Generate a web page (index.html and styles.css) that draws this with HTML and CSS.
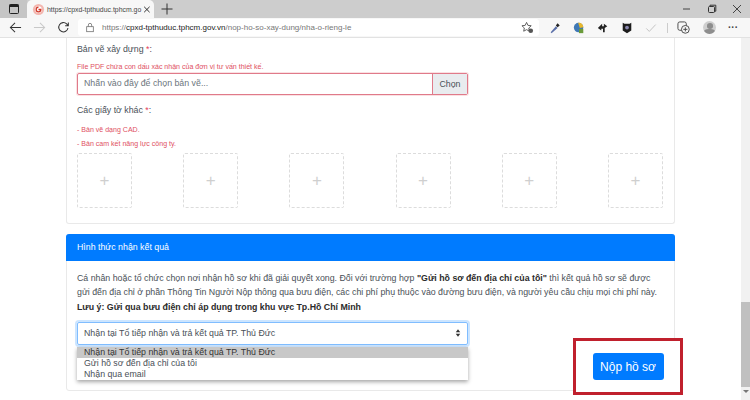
FILE: index.html
```html
<!DOCTYPE html>
<html lang="vi">
<head>
  <meta charset="UTF-8">
  <meta name="viewport" content="width=device-width, initial-scale=1.0">
  <title>Nộp hồ sơ</title>
  <link rel="stylesheet" href="styles.css">
</head>
<body>
  <div class="tabstrip">
    <span class="tab-actions"><svg viewBox="0 0 12 12" width="12" height="12"><rect x="1.500" y="1.500" width="9" height="9" rx="1" fill="none" stroke="#222" stroke-width="1"/><rect x="1.500" y="1.500" width="9" height="2.500" fill="#222"/></svg></span>
    <div class="tab">
      <svg class="favicon" viewBox="0 0 14 14" width="13" height="13"><circle cx="7" cy="7" r="6" fill="#f3b7b0"/><circle cx="7" cy="7" r="3.600" fill="#fff"/><path d="M7 4.500a2.500 2.500 0 1 0 2.500 2.500H7" fill="none" stroke="#d0392b" stroke-width="1.400"/></svg>
      <span class="tab-title">https://cpxd-tpthuduc.tphcm.go</span>
      <svg viewBox="0 0 10 10" width="9" height="9"><path d="M1.500 1.500l7 7M8.500 1.500l-7 7" stroke="#222" stroke-width="1.200"/></svg>
    </div>
    <svg class="new-tab" viewBox="0 0 12 12" width="12" height="12"><path d="M6 .5v11M.5 6h11" stroke="#333" stroke-width="1"/></svg>
    <div class="win-controls">
      <svg viewBox="0 0 10 10" width="10" height="10"><path d="M1 5h7" stroke="#444" stroke-width="1"/></svg>
      <svg viewBox="0 0 10 10" width="10" height="10"><rect x="1.500" y="2.500" width="6" height="6" rx="1" fill="none" stroke="#333"/><path d="M3 2.500V1.200h5.800v6H7" fill="none" stroke="#333"/></svg>
      <svg viewBox="0 0 10 10" width="10" height="10"><path d="M1 1l8 8M9 1l-8 8" stroke="#444" stroke-width="1"/></svg>
    </div>
  </div>

  <div class="toolbar">
    <svg class="nav-icon" viewBox="0 0 14 14" width="13" height="13"><path d="M13 7H1.500M6.500 2l-5 5 5 5" fill="none" stroke="#333" stroke-width="1.100"/></svg>
    <svg class="nav-icon" viewBox="0 0 14 14" width="13" height="13"><path d="M1 7h11.500M7.500 2l5 5-5 5" fill="none" stroke="#c8c8c8" stroke-width="1.100"/></svg>
    <svg class="nav-icon" viewBox="0 0 14 14" width="13" height="13"><path d="M11.800 7.500A5 5 0 1 1 10.400 3.200L12 5M12.200 1.500V5H8.800" fill="none" stroke="#333" stroke-width="1.100"/></svg>
    <div class="address">
      <svg viewBox="0 0 12 12" width="10" height="11"><rect x="2" y="5" width="8" height="6" fill="none" stroke="#777"/><path d="M4 5V3a2 2 0 0 1 4 0v2" fill="none" stroke="#777"/></svg>
      <span class="url"><span class="url-dim">https://</span>cpxd-tpthuduc.tphcm.gov.vn<span class="url-dim">/nop-ho-so-xay-dung/nha-o-rieng-le</span></span>
      <svg class="fav-star" viewBox="0 0 14 14" width="13" height="13"><path d="M6 1.500l1.500 3.200 3.500.4-2.600 2.400.7 3.500L6 9.300l-3.100 1.700.7-3.500L1 5.100l3.500-.4z" fill="none" stroke="#555"/><circle cx="10.500" cy="10.500" r="2.500" fill="#555"/></svg>
    </div>
    <div class="extensions">
      <svg viewBox="0 0 14 14" width="12" height="12"><path d="M2 12l6-7 2 2-7 6z" fill="#5a6fa8"/><path d="M8 4l2-2.500 2.500 2.500L10 6z" fill="#222"/></svg>
      <svg viewBox="0 0 14 14" width="12" height="12"><circle cx="6.500" cy="6.500" r="5.500" fill="#3f78b5"/><path d="M6 1a5 5 0 0 1 6 5l-4 1z" fill="#e8b72c"/><rect x="7" y="8" width="5" height="5" fill="#6a9b3a"/></svg>
      <svg viewBox="0 0 14 14" width="12" height="12"><path d="M1 7l5-5v3h2V2l4 3-3 2v5H7V8H5v2z" fill="#222"/></svg>
      <svg viewBox="0 0 14 14" width="12" height="12"><path d="M2 1l2 1h6l2-1v9l-5 3-5-3z" fill="#1c1c1c"/><circle cx="7" cy="6.500" r="2.200" fill="#8a88b0"/></svg>
      <svg viewBox="0 0 14 14" width="12" height="12"><path d="M1.500 7.500l3.500 3.500 7.500-8" fill="none" stroke="#bbb"/></svg>
      <span class="divider"></span>
      <svg viewBox="0 0 14 14" width="13" height="13"><rect x="1" y="1" width="9" height="9" rx="2" fill="none" stroke="#444"/><circle cx="9" cy="9" r="4.200" fill="#f5f5f5" stroke="#444"/><path d="M9 6.800v4.400M6.800 9h4.400" stroke="#444"/></svg>
      <span class="avatar"><span class="avatar-head"></span><span class="avatar-body"></span></span>
      <span class="more">···</span>
    </div>
  </div>

  <div class="viewport">
    <main class="page">
      <section class="card upload-card">
        <label class="field-label">Bản vẽ xây dựng <span class="req">*</span>:</label>
        <p class="hint hint-first">File PDF chứa con dấu xác nhận của đơn vị tư vấn thiết kế.</p>
        <div class="file-input">
          <span class="file-name">Nhấn vào đây để chọn bản vẽ...</span>
          <span class="file-btn">Chọn</span>
        </div>
        <label class="field-label other-label">Các giấy tờ khác <span class="req">*</span>:</label>
        <p class="hint hint-line">- Bản vẽ dạng CAD.</p>
        <p class="hint hint-line">- Bản cam kết năng lực công ty.</p>
        <div class="upload-row">
          <div class="upload-box">+</div>
          <div class="upload-box">+</div>
          <div class="upload-box">+</div>
          <div class="upload-box">+</div>
          <div class="upload-box">+</div>
          <div class="upload-box">+</div>
        </div>
      </section>

      <section class="card result-card">
        <h2 class="card-header">Hình thức nhận kết quả</h2>
        <div class="card-body">
          <p class="result-text">Cá nhân hoặc tổ chức chọn nơi nhận hồ sơ khi đã giải quyết xong. Đối với trường hợp <strong>"Gửi hồ sơ đến địa chỉ của tôi"</strong> thì kết quả hồ sơ sẽ được gửi đến địa chỉ ở phần Thông Tin Người Nộp thông qua bưu điện, các chi phí phụ thuộc vào đường bưu điện, và người yêu cầu chịu mọi chi phí này.<br><strong>Lưu ý: Gửi qua bưu điện chỉ áp dụng trong khu vực Tp.Hồ Chí Minh</strong></p>
          <div class="select-wrap">
            <div class="select-box">
              <span>Nhận tại Tổ tiếp nhận và trả kết quả TP. Thủ Đức</span>
              <svg viewBox="0 0 8 10" width="6" height="8"><path d="M4 0l3 4H1zM4 10L1 6h6z" fill="#333"/></svg>
            </div>
            <ul class="select-menu">
              <li class="selected">Nhận tại Tổ tiếp nhận và trả kết quả TP. Thủ Đức</li>
              <li>Gửi hồ sơ đến địa chỉ của tôi</li>
              <li>Nhận qua email</li>
            </ul>
          </div>
        </div>
      </section>

      <div class="submit-mark"><button class="submit-btn">Nộp hồ sơ</button></div>
    </main>

    <div class="scrollbar">
      <span class="thumb"></span>
      <span class="arrow-down"></span>
    </div>
  </div>
</body>
</html>
```

FILE: styles.css
```css
* {
  box-sizing: border-box;
}
html, body {
  height: 100%;
}
body {
  margin: 0;
  height: 400px;
  overflow: hidden;
  font-family: 'Liberation Sans', Arial, sans-serif;
  color: #495057;
  background: #fff;
  display: flex;
  flex-direction: column;
}

/* browser chrome */
.tabstrip {
  height: 18px;
  background: #cdcdcd;
  display: flex;
  align-items: center;
  flex-shrink: 0;
}
.tab-actions {
  width: 27px;
  height: 18px;
  background: #c5c5c5;
  display: flex;
  align-items: center;
  justify-content: center;
}
.tab {
  width: 127px;
  height: 18px;
  padding: 0 3px 0 5px;
  background: #f7f7f7;
  border-radius: 5px 5px 0 0;
  display: flex;
  align-items: center;
  gap: 2px;
}
.favicon {
  flex-shrink: 0;
}
.tab-title {
  flex: 1;
  font-size: 6.900px;
  color: #444;
  white-space: nowrap;
}
.new-tab {
  margin-left: 7px;
}
.win-controls {
  margin-left: auto;
  display: flex;
  gap: 15px;
  padding-right: 8px;
}
.toolbar {
  height: 20px;
  background: #f7f7f7;
  border-bottom: 1px solid #e2e2e2;
  display: flex;
  align-items: center;
  padding-left: 9px;
  flex-shrink: 0;
}
.nav-icon {
  margin-right: 11px;
}
.address {
  width: 461px;
  height: 17px;
  margin-left: -3px;
  background: #fff;
  border-radius: 3px;
  display: flex;
  align-items: center;
  padding: 0 5px 0 7px;
  gap: 7px;
}
.url {
  flex: 1;
  font-size: 8px;
  color: #222;
  white-space: nowrap;
}
.url-dim {
  color: #777;
}
.extensions {
  flex: 1;
  display: flex;
  align-items: center;
  gap: 12px;
  padding-left: 10px;
}
.divider {
  width: 1px;
  height: 10px;
  margin: 0 -3px 0 -2px;
  background: #ccc;
}
.avatar {
  width: 13px;
  height: 13px;
  margin-left: 1px;
  border-radius: 50%;
  background: #cfcfcf;
  overflow: hidden;
  display: flex;
  flex-direction: column;
  align-items: center;
}
.avatar-head {
  width: 6px;
  height: 6px;
  margin-top: 2px;
  border-radius: 50%;
  background: #8d8d8d;
}
.avatar-body {
  width: 11px;
  height: 6px;
  border-radius: 50%;
  background: #8d8d8d;
}
.more {
  font-size: 10px;
  font-weight: bold;
  color: #444;
}

/* page */
.viewport {
  flex: 1;
  display: flex;
  min-height: 0;
}
.page {
  flex: 1;
  padding: 0 66px;
  overflow: hidden;
  position: relative;
}
.card {
  border: 1px solid #e9e9e9;
  border-radius: 3px;
  background: #fff;
}
.upload-card {
  height: 187px;
  margin-top: -1px;
  border-top: 0;
  border-radius: 0 0 3px 3px;
  padding: 6px 11px 0 10px;
}
.field-label {
  display: block;
  font-size: 8.800px;
  line-height: 13px;
  color: #495057;
}
.req {
  color: #e4405a;
}
.hint {
  margin: 0;
  font-size: 7.050px;
  color: #e0505f;
}
.hint-first {
  margin-top: 6px;
  line-height: 10px;
}
.file-input {
  height: 22px;
  margin-top: 1px;
  width: 391px;
  display: flex;
  border: 1px solid #e07a8a;
  border-radius: 2px;
  box-shadow: 0 0 0 1px rgba(220, 53, 69, 0.15);
  font-size: 8.800px;
}
.file-name {
  flex: 1;
  padding: 0 6px;
  line-height: 19px;
  color: #6c757d;
}
.file-btn {
  width: 35px;
  text-align: center;
  line-height: 20px;
  background: #e9ecef;
  border-left: 1px solid #e07a8a;
}
.other-label {
  margin-top: 9px;
}
.hint-line {
  line-height: 10px;
  margin-bottom: 4px;
}
.other-label + .hint-line {
  margin-top: 8px;
}
.upload-row {
  margin-top: 2px;
  display: flex;
  justify-content: space-between;
}
.upload-box {
  width: 55px;
  height: 55px;
  border: 1px dashed #dcdcdc;
  border-radius: 2px;
  display: flex;
  align-items: center;
  justify-content: center;
  font-size: 17px;
  color: #cfcfcf;
}
.result-card {
  height: 157px;
  margin-top: 10px;
}
.card-header {
  margin: -1px -1px 0;
  height: 27px;
  padding: 0 11px;
  background: #007bff;
  border-radius: 3px 3px 0 0;
  color: #fff;
  font-size: 8.800px;
  font-weight: normal;
  line-height: 27px;
}
.card-body {
  padding: 10px 10px 0;
}
.result-text {
  margin: 0;
  font-size: 8.800px;
  line-height: 14.300px;
  color: #495057;
}
.result-text strong {
  color: #2b2b2b;
}
.select-wrap {
  position: relative;
  margin-top: 8px;
  width: 391px;
}
.select-box {
  height: 23px;
  padding: 0 6px;
  border: 1px solid #80bdff;
  border-radius: 2px;
  box-shadow: 0 0 0 2px rgba(0, 123, 255, 0.2);
  display: flex;
  align-items: center;
  justify-content: space-between;
  font-size: 8.800px;
}
.select-menu {
  position: absolute;
  top: 25px;
  left: 0;
  right: 0;
  margin: 0;
  padding: 0;
  list-style: none;
  background: #fff;
  box-shadow: 0 2px 4px rgba(0, 0, 0, 0.35);
  font-size: 8.800px;
  line-height: 11px;
}
.select-menu li {
  padding: 0 7px;
}
.select-menu .selected {
  background: #c8c8c8;
  color: #333;
}
.submit-mark {
  position: absolute;
  left: 573px;
  top: 300px;
  width: 110px;
  height: 57px;
  border: 3px solid #c0202d;
  background: #fff;
  display: flex;
  align-items: center;
  justify-content: center;
}
.submit-btn {
  width: 71px;
  height: 27px;
  padding: 0;
  border: none;
  border-radius: 3px;
  background: #007bff;
  color: #fff;
  font-family: inherit;
  font-size: 12px;
}
.scrollbar {
  width: 9px;
  background: #f1f1f1;
  display: flex;
  flex-direction: column;
  align-items: center;
  flex-shrink: 0;
}
.thumb {
  margin-top: auto;
  width: 100%;
  height: 85px;
  background: #c0c0c0;
}
.arrow-down {
  height: 10px;
  margin-top: 3px;
  border-left: 3px solid transparent;
  border-right: 3px solid transparent;
  border-top: 3px solid #777;
}
```
